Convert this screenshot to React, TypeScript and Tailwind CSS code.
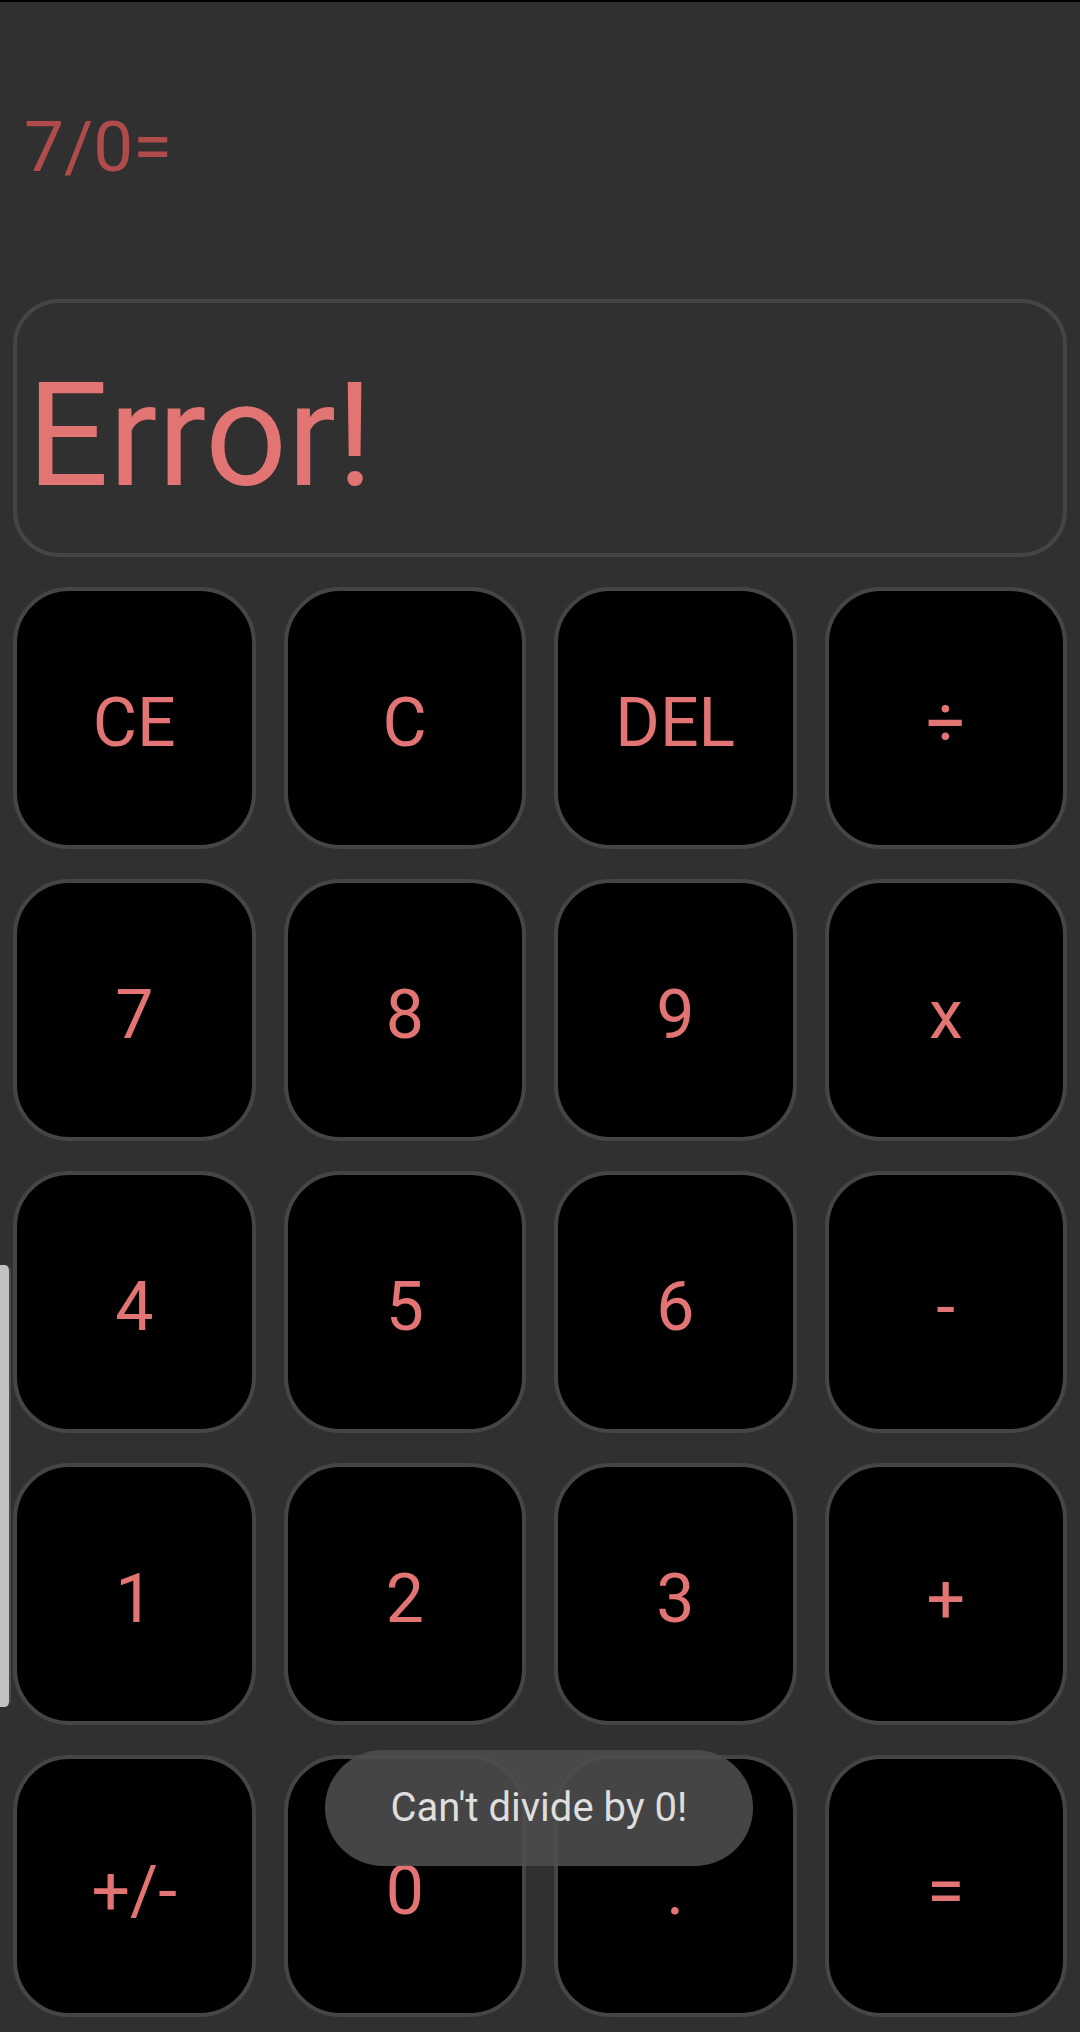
const keys = ['CE', 'C', 'DEL', '÷', '7', '8', '9', 'x', '4', '5', '6', '-', '1', '2', '3', '+', '+/-', '0', '.', '=']

function Key({ label }: { label: string }) {
  return (
    <button className="flex h-[262px] items-center justify-center rounded-[56px] border-4 border-[#454545] bg-black pt-[10px] text-[68px] leading-none text-[#e27474]">
      {label}
    </button>
  )
}

export default function App() {
  return (
    <div className="relative h-[2032px] w-[1080px] overflow-hidden border-t-2 border-black bg-[#303030] font-['Roboto','Noto_Sans',sans-serif]">
      {/* expression */}
      <div className="flex h-[297px] items-center pb-[8px] pl-[24px] text-[71px] leading-none text-[#b04b4b]">7/0=</div>

      {/* result */}
      <div className="mx-[13px] flex h-[258px] items-center rounded-[46px] border-4 border-[#454545] pl-[10px] pt-[16px] text-[144px] leading-none text-[#e27474]">
        Error!
      </div>

      {/* keypad */}
      <div className="mx-[13px] mt-[30px] grid grid-cols-4 gap-x-[28px] gap-y-[30px]">
        {keys.map((k) => (
          <Key key={k} label={k} />
        ))}
      </div>

      {/* edge panel handle */}
      <div className="absolute left-0 top-[1263px] h-[442px] w-[11px] rounded-r-[6px] border-r-2 border-[#4a4a4a] bg-[#c2c2c2]" />

      {/* toast */}
      <div className="absolute left-[325px] top-[1748px] flex h-[116px] w-[428px] items-center justify-center rounded-full bg-[#4c4c4c]/90 text-[40px] text-[#dedede]">
        Can't divide by 0!
      </div>
    </div>
  )
}
